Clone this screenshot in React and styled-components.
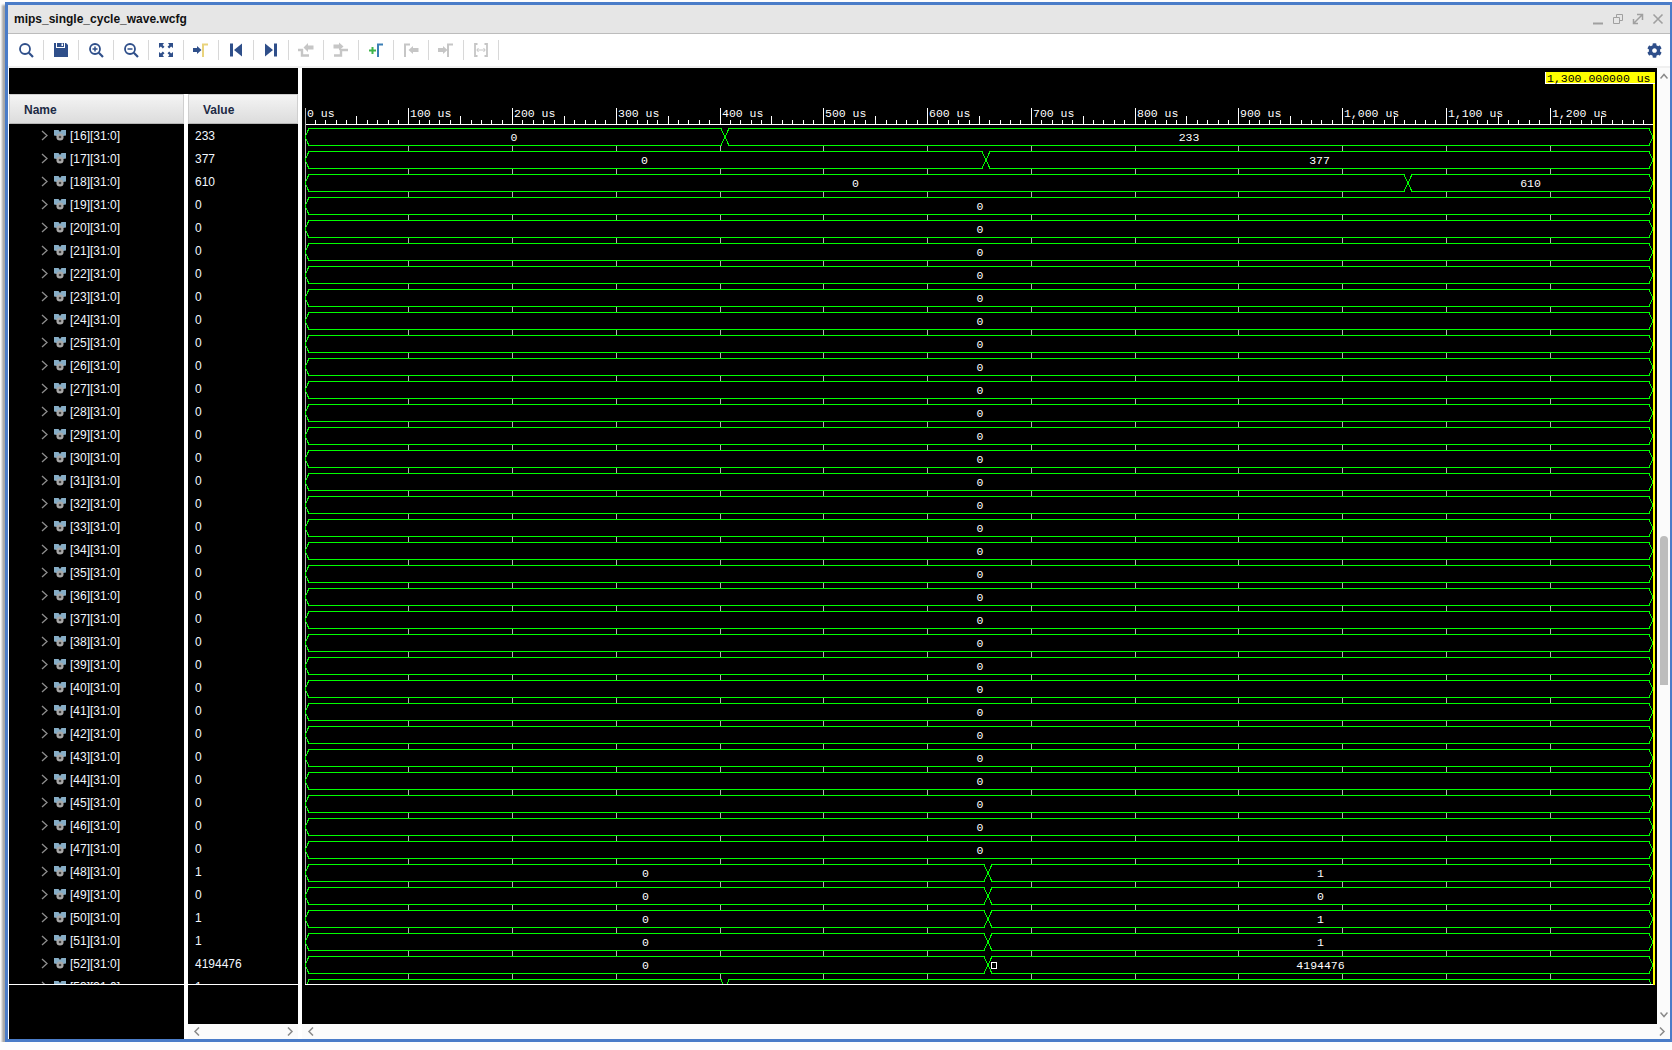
import styled, { createGlobalStyle } from "styled-components";
import { FaCog } from "react-icons/fa";

const GlobalStyle = createGlobalStyle`
  html, body {
    margin: 0;
    padding: 0;
    background: #fdfdfd;
    font-family: "Liberation Sans", Arial, sans-serif;
  }
`;

const NAVY = "#2f4f8a";
const OFF = "#c6c6c6";
const GOLD = "#e9d37c";
const BLUE = "#3b7fb6";
const GREEN = "#3fb54a";

const T0 = 305;
const PX_PER_100US = 103.75;
const T_END = 1653;
const FIRST_ROW_TOP = 128;
const ROW_PITCH = 23;
const BUS_HEIGHT = 17;

const rows = [];
const addRow = (id, value, before, t, after) =>
  rows.push({ id, value, before, t, after });
addRow(16, "233", "0", 725, "233");
addRow(17, "377", "0", 986, "377");
addRow(18, "610", "0", 1408, "610");
for (let id = 19; id <= 47; id++) addRow(id, "0", "0");
addRow(48, "1", "0", 988, "1");
addRow(49, "0", "0", 988, "0");
addRow(50, "1", "0", 988, "1");
addRow(51, "1", "0", 988, "1");
addRow(52, "4194476", "0", 988, "4194476");
addRow(53, "1", "0", 725, "1");

const Window = styled.div`
  box-sizing: border-box;
  width: 1667px;
  height: 1040px;
  margin: 2px 0 0 5px;
  display: flex;
  flex-direction: column;
  background: #fff;
  border-style: solid;
  border-color: #4a7cc8;
  border-width: 3px 2px 3px 3px;
  box-shadow: -3px 3px 2px #a6a6a6, 0 4px 2px #a0a0a0;
`;

const TitleBar = styled.div`
  box-sizing: border-box;
  height: 29px;
  flex: none;
  display: flex;
  align-items: center;
  justify-content: space-between;
  padding: 0 6px 1px 6px;
  background: #e6e6e6;
  border-bottom: 1px solid #bcbcbc;
`;

const Title = styled.span`
  font-size: 12px;
  font-weight: 700;
  color: #111;
`;

const WindowButtons = styled.div`
  display: flex;
  gap: 8px;
  align-items: center;
`;

const Toolbar = styled.div`
  box-sizing: border-box;
  height: 34px;
  flex: none;
  display: flex;
  align-items: center;
  padding: 0 8px 0 0;
  background: #fff;
  border-bottom: 2px solid #f0f0f0;
`;

const ToolButton = styled.div`
  box-sizing: border-box;
  width: 35px;
  height: 20px;
  display: flex;
  align-items: center;
  justify-content: center;
  border-right: 1px solid #d8d8d8;
  &:first-child {
    width: 36px;
    padding-left: 1px;
  }
`;

const ToolbarEnd = styled.div`
  margin-left: auto;
  display: flex;
  align-items: center;
`;

const Panes = styled.div`
  flex: 1;
  min-height: 0;
  display: flex;
  padding-left: 1px;
`;

const Pane = styled.div`
  width: ${(p) => p.$width}px;
  flex: none;
  display: flex;
  flex-direction: column;
  background: #000;
  margin-right: ${(p) => p.$gap || 0}px;
`;

// the black band above the headers runs across the gap between Name and Value
const PaneTop = styled.div`
  height: 26px;
  flex: none;
  background: #000;
  margin-right: ${(p) => p.$bridge || 0}px;
`;

const ColumnHeader = styled.div`
  box-sizing: border-box;
  height: 30px;
  flex: none;
  display: flex;
  align-items: center;
  padding: 2px 0 0 ${(p) => p.$indent}px;
  font-size: 12px;
  font-weight: 700;
  color: #1c2a44;
  background: linear-gradient(#f4f4f4, #dcdcdc);
  border: 1px solid #cfcfcf;
  border-bottom-color: #b5b5b5;
`;

const RowList = styled.div`
  box-sizing: border-box;
  height: 861px;
  flex: none;
  overflow: hidden;
  border-bottom: 1px solid #fff;
`;

const SignalRow = styled.div`
  height: 23px;
  display: flex;
  align-items: center;
  padding-left: ${(p) => p.$indent}px;
  font-size: 12px;
  color: #f2f8ff;
  white-space: nowrap;
`;

const Expander = styled.svg`
  width: 7px;
  height: 11px;
  margin-right: 5px;
  flex: none;
`;

const SignalIcon = styled.svg`
  width: 14px;
  height: 13px;
  margin-right: 3px;
  flex: none;
`;

const HScroll = styled.div`
  box-sizing: border-box;
  height: 15px;
  margin-top: auto;
  flex: none;
  display: flex;
  align-items: center;
  justify-content: space-between;
  padding: 0 4px 1px 5px;
  background: #fbfbfb;
`;

const WaveColumn = styled.div`
  flex: 1;
  min-width: 0;
  display: flex;
  flex-direction: column;
`;

const WaveBody = styled.div`
  display: flex;
  flex: 1;
  min-height: 0;
`;

const WaveSvg = styled.svg`
  display: block;
  width: 1355px;
  height: 956px;
  background: #000;
  flex: none;
`;

const VScroll = styled.div`
  box-sizing: border-box;
  flex: 1;
  height: 956px;
  display: flex;
  flex-direction: column;
  align-items: center;
  justify-content: space-between;
  padding: 4px 0 5px;
  background: #fbfbfb;
  position: relative;
`;

const Thumb = styled.div`
  position: absolute;
  top: 468px;
  left: 3px;
  width: 8px;
  height: 149px;
  border-radius: 4px 4px 0 0;
  background: #bdbdbd;
`;

const RulerText = styled.text`
  font-family: "Liberation Mono", monospace;
  font-size: 11.5px;
  fill: #fff;
`;

const BusText = styled.text`
  font-family: "Liberation Mono", monospace;
  font-size: 11.5px;
  fill: #fff;
  text-anchor: middle;
`;

const CursorText = styled.text`
  font-family: "Liberation Mono", monospace;
  font-size: 11.5px;
  fill: #000;
`;

const Ico = ({ children }) => (
  <svg width="16" height="16" viewBox="0 0 16 16">
    {children}
  </svg>
);

const Lens = ({ children }) => (
  <Ico>
    <circle cx="7" cy="7" r="5" fill="none" stroke={NAVY} strokeWidth="1.8" />
    <path d="M10.8 10.8L15 15" stroke={NAVY} strokeWidth="2.2" />
    {children}
  </Ico>
);

const Bracket = ({ color, x = 10 }) => (
  <path
    d={`M${x} 15V2.5H${x + 5}`}
    fill="none"
    stroke={color}
    strokeWidth="2"
  />
);

const toolIcons = [
  <Lens key="find" />,
  <Ico key="save">
    <path d="M1 1H3V6H12V1H13L15 3V15H1Z" fill={NAVY} />
    <path d="M4 1H11V5H4Z" fill={NAVY} />
    <path d="M8.5 1.5H10V4H8.5Z" fill="#fff" />
  </Ico>,
  <Lens key="in">
    <path d="M4.5 7H9.5M7 4.5V9.5" stroke={NAVY} strokeWidth="1.5" />
  </Lens>,
  <Lens key="out">
    <path d="M4.5 7H9.5" stroke={NAVY} strokeWidth="1.5" />
  </Lens>,
  <Ico key="fit">
    <path d="M1 1H6L4.6 2.9L6.5 4.8L4.8 6.5L2.9 4.6L1 6Z" fill={NAVY} />
    <path d="M15 1H10L11.4 2.9L9.5 4.8L11.2 6.5L13.1 4.6L15 6Z" fill={NAVY} />
    <path d="M1 15H6L4.6 13.1L6.5 11.2L4.8 9.5L2.9 11.4L1 10Z" fill={NAVY} />
    <path d="M15 15H10L11.4 13.1L9.5 11.2L11.2 9.5L13.1 11.4L15 10Z" fill={NAVY} />
  </Ico>,
  <Ico key="cursor">
    <path d="M0 6H4V4L8.5 8L4 12V10H0Z" fill={NAVY} />
    <Bracket color={GOLD} />
  </Ico>,
  <Ico key="first">
    <path d="M2 1.5H5V14.5H2ZM14 1.5V14.5L6 8Z" fill={NAVY} />
  </Ico>,
  <Ico key="last">
    <path d="M14 1.5H11V14.5H14ZM2 1.5V14.5L10 8Z" fill={NAVY} />
  </Ico>,
  <Ico key="prevEdge">
    <path d="M0 8H4V13.5H11" fill="none" stroke={OFF} strokeWidth="2.4" />
    <path d="M15.5 3.5H10V1L5.5 5.5L10 10V7.5H15.5Z" fill={OFF} />
  </Ico>,
  <Ico key="nextEdge">
    <path d="M1 13.5H8V8H15" fill="none" stroke={OFF} strokeWidth="2.4" />
    <path d="M0.5 2.5H6V0.5L10.5 4.5L6 8.5V6.5H0.5Z" fill={OFF} />
  </Ico>,
  <Ico key="addMarker">
    <path d="M1 8.5H8M4.5 5V12" stroke={GREEN} strokeWidth="2" />
    <Bracket color={BLUE} />
  </Ico>,
  <Ico key="prevMarker">
    <Bracket color={OFF} x={2} />
    <path d="M15.5 6H10V4L5.5 8L10 12V10H15.5Z" fill={OFF} />
  </Ico>,
  <Ico key="nextMarker">
    <path d="M0 6H5V4L9.5 8L5 12V10H0Z" fill={OFF} />
    <Bracket color={OFF} />
  </Ico>,
  <Ico key="swap">
    <path d="M4.5 2H2V14H4.5M11.5 2H14V14H11.5" fill="none" stroke={OFF} strokeWidth="1.8" />
    <path d="M4 8H12M5.5 6L3.8 8L5.5 10M10.5 6L12.2 8L10.5 10" fill="none" stroke={OFF} strokeWidth="1" />
  </Ico>,
];

const WindowGlyph = ({ children }) => (
  <svg width="12" height="12" viewBox="0 0 12 12" fill="none" stroke="#a0a0a0">
    {children}
  </svg>
);

const Arrow = ({ d, w = 8, h = 9 }) => (
  <svg width={w} height={h} viewBox={`0 0 ${w} ${h}`}>
    <path d={d} fill="none" stroke="#8a8a8a" strokeWidth="1.5" />
  </svg>
);

const SignalGlyph = () => (
  <SignalIcon viewBox="0 0 14 13">
    <path d="M1 1H5.5L7 3L8.5 1H13V6.5L10 7H4L1 6.5Z" fill="#86adc6" />
    <circle cx="7" cy="8" r="3.6" fill="#a8a8a8" />
    <circle cx="7" cy="8" r="1.3" fill="#444" />
  </SignalIcon>
);

const Bus = ({ top, before, t, after }) => {
  const y0 = top + 0.5;
  const y1 = top + BUS_HEIGHT + 0.5;
  const mid = top + BUS_HEIGHT / 2 + 0.5;
  const L = T0;
  const R = T_END;
  const outline = t
    ? `M${L} ${mid}L${L + 4} ${y0}H${t - 4}L${t + 4} ${y1}H${R - 4}L${R} ${mid}L${R - 4} ${y0}H${t + 4}L${t - 4} ${y1}H${L + 4}Z`
    : `M${L} ${mid}L${L + 4} ${y0}H${R - 4}L${R} ${mid}L${R - 4} ${y1}H${L + 4}Z`;
  const textY = top + 13;
  return (
    <g>
      <path d={outline} fill="none" stroke="#00ff00" strokeWidth="1" shapeRendering="crispEdges" />
      {t ? (
        <>
          <BusText x={(T0 + t) / 2 - 1} y={textY}>{before}</BusText>
          <BusText x={(t + R) / 2} y={textY}>{after}</BusText>
        </>
      ) : (
        <BusText x={(T0 + R) / 2 + 1} y={textY}>{before}</BusText>
      )}
    </g>
  );
};

const Ruler = () => {
  const ticks = [];
  for (let i = 0; i < 130; i++) {
    const x = Math.floor(T0 + (i * PX_PER_100US) / 10);
    if (i % 10 === 0) continue;
    const tall = i % 5 === 0;
    ticks.push(
      <path key={i} d={`M${x + 0.5} ${tall ? 116 : 120}V124`} stroke="#fff" />
    );
  }
  const majors = [];
  for (let i = 0; i <= 12; i++) {
    const x = Math.floor(T0 + i * PX_PER_100US);
    const us = i * 100;
    const label = us >= 1000 ? `1,${String(us - 1000).padStart(3, "0")} us` : `${us} us`;
    majors.push(
      <g key={i}>
        <path d={`M${x + 0.5} 108V124`} stroke="#fff" />
        <RulerText x={x + 2} y={117}>{label}</RulerText>
      </g>
    );
  }
  return (
    <g shapeRendering="crispEdges">
      <path d={`M${T0} 124.5H${T_END + 1}`} stroke="#fff" />
      {ticks}
      {majors}
    </g>
  );
};

const GapTicks = () => {
  const marks = [];
  rows.forEach((_, r) => {
    const y = FIRST_ROW_TOP + r * ROW_PITCH + BUS_HEIGHT + 1;
    for (let i = 1; i <= 12; i++) {
      const x = Math.floor(T0 + i * PX_PER_100US);
      marks.push(<path key={`${r}-${i}`} d={`M${x + 0.5} ${y}V${y + 5}`} stroke="#b4b4b4" />);
    }
  });
  return <g shapeRendering="crispEdges">{marks}</g>;
};

const WaveChart = () => (
  <WaveSvg viewBox="302 68 1355 956">
    <defs>
      <clipPath id="waves">
        <rect x="302" y="124" width="1355" height="860" />
      </clipPath>
    </defs>
    <Ruler />
    <path d={`M${T0 + 0.5} 108V984`} stroke="#b4b4b4" shapeRendering="crispEdges" />
    <g clipPath="url(#waves)">
      <GapTicks />
      {rows.map((r, i) => (
        <Bus key={r.id} top={FIRST_ROW_TOP + i * ROW_PITCH} before={r.before} t={r.t} after={r.after} />
      ))}
    </g>
    <rect x="991.5" y="962.5" width="5" height="6" fill="none" stroke="#fff" shapeRendering="crispEdges" />
    <path d={`M${T0} 984.5H1655`} stroke="#fff" shapeRendering="crispEdges" />
    <rect x="1653" y="84" width="2" height="901" fill="#ffff00" />
    <rect x="1545" y="72" width="110" height="12" fill="#fff" />
    <rect x="1546" y="72" width="109" height="11" fill="#ffff00" />
    <CursorText x="1547" y="82">1,300.000000 us</CursorText>
  </WaveSvg>
);

const App = () => (
  <>
    <GlobalStyle />
    <Window>
      <TitleBar>
        <Title>mips_single_cycle_wave.wcfg</Title>
        <WindowButtons>
          <WindowGlyph>
            <path d="M1 10.5H11" strokeWidth="2" />
          </WindowGlyph>
          <WindowGlyph>
            <path d="M1.5 4.5H7.5V10.5H1.5ZM4.5 4V1.5H10.5V7.5H8" />
          </WindowGlyph>
          <WindowGlyph>
            <path d="M5 1.5H10.5V7M10 2L2 10M1.5 6V10.5H6" strokeWidth="1.5" />
          </WindowGlyph>
          <WindowGlyph>
            <path d="M1.5 1.5L10.5 10.5M10.5 1.5L1.5 10.5" strokeWidth="1.6" />
          </WindowGlyph>
        </WindowButtons>
      </TitleBar>
      <Toolbar>
        {toolIcons.map((icon) => (
          <ToolButton key={icon.key}>{icon}</ToolButton>
        ))}
        <ToolbarEnd>
          <FaCog size={15} color={NAVY} />
        </ToolbarEnd>
      </Toolbar>
      <Panes>
        <Pane $width={175} $gap={4}>
          <PaneTop $bridge={-4} />
          <ColumnHeader $indent={14}>Name</ColumnHeader>
          <RowList>
            {rows.map((r) => (
              <SignalRow key={r.id} $indent={32}>
                <Expander viewBox="0 0 7 11">
                  <path d="M1 1L6 5.5L1 10" fill="none" stroke="#8d8d8d" strokeWidth="1.3" />
                </Expander>
                <SignalGlyph />
                [{r.id}][31:0]
              </SignalRow>
            ))}
          </RowList>
        </Pane>
        <Pane $width={110} $gap={4}>
          <PaneTop />
          <ColumnHeader $indent={14}>Value</ColumnHeader>
          <RowList>
            {rows.map((r) => (
              <SignalRow key={r.id} $indent={7}>
                {r.value}
              </SignalRow>
            ))}
          </RowList>
          <HScroll>
            <Arrow d="M6 0.5L2 4.5L6 8.5" />
            <Arrow d="M2 0.5L6 4.5L2 8.5" />
          </HScroll>
        </Pane>
        <WaveColumn>
          <WaveBody>
            <WaveChart />
            <VScroll>
              <Arrow d="M0.5 6.5L4 2.5L7.5 6.5" />
              <Thumb />
              <Arrow d="M0.5 2.5L4 6.5L7.5 2.5" />
            </VScroll>
          </WaveBody>
          <HScroll>
            <Arrow d="M6 0.5L2 4.5L6 8.5" />
            <Arrow d="M2 0.5L6 4.5L2 8.5" />
          </HScroll>
        </WaveColumn>
      </Panes>
    </Window>
  </>
);

export default App;
